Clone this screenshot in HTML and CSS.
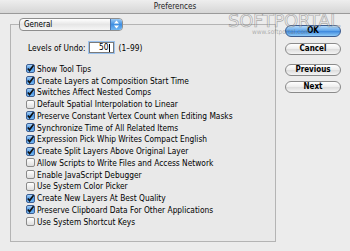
FILE: index.html
```html
<!DOCTYPE html>
<html>
<head>
<meta charset="utf-8">
<link rel="stylesheet" href="styles.css">
</head>
<body>
<div class="window">
  <div class="titlebar">Preferences</div>
  <div class="content">
    <div class="group">
      <div class="popup">
        <span class="popup-label">General</span>
        <span class="popup-arrows">
          <svg width="7" height="9" viewBox="0 0 7 9"><path d="M3.5 0.5 L6 3.5 H1 Z M3.5 8.5 L6 5.5 H1 Z" fill="#fff"/></svg>
        </span>
      </div>
      <div class="undo-row">
        <span class="undo-label">Levels of Undo:</span>
        <span class="undo-input">50<span class="caret"></span></span>
        <span class="undo-range">(1–99)</span>
      </div>
      <ul class="options">
        <li><span class="cb on"></span>Show Tool Tips</li>
        <li><span class="cb on"></span>Create Layers at Composition Start Time</li>
        <li><span class="cb on"></span>Switches Affect Nested Comps</li>
        <li><span class="cb"></span>Default Spatial Interpolation to Linear</li>
        <li><span class="cb on"></span>Preserve Constant Vertex Count when Editing Masks</li>
        <li><span class="cb on"></span>Synchronize Time of All Related Items</li>
        <li><span class="cb on"></span>Expression Pick Whip Writes Compact English</li>
        <li><span class="cb on"></span>Create Split Layers Above Original Layer</li>
        <li><span class="cb"></span>Allow Scripts to Write Files and Access Network</li>
        <li><span class="cb"></span>Enable JavaScript Debugger</li>
        <li><span class="cb"></span>Use System Color Picker</li>
        <li><span class="cb on"></span>Create New Layers At Best Quality</li>
        <li><span class="cb on"></span>Preserve Clipboard Data For Other Applications</li>
        <li><span class="cb"></span>Use System Shortcut Keys</li>
      </ul>
    </div>
    <div class="buttons">
      <div class="btn default">OK</div>
      <div class="btn cancel">Cancel</div>
      <div class="btn prev">Previous</div>
      <div class="btn next">Next</div>
    </div>
  </div>
  <div class="watermark">
    <span class="wm-big">SOFTPORTAL</span>
    <span class="wm-small">www.softportal.com</span>
  </div>
</div>
</body>
</html>
```
FILE: styles.css
```css
html, body {
  margin: 0;
  padding: 0;
}
body {
  width: 350px;
  height: 251px;
  overflow: hidden;
  background: #ececec;
  font-family: "DejaVu Sans Condensed", "DejaVu Sans", sans-serif;
  color: #000;
}
.window {
  position: relative;
  width: 350px;
  height: 251px;
  background: #ececec;
}
.titlebar {
  height: 13px;
  line-height: 13px;
  text-align: center;
  font-size: 8px;
  color: #222;
  background: linear-gradient(#eeeeee, #d6d6d6);
  border-bottom: 1px solid #9a9a9a;
}
.content {
  display: flex;
  align-items: flex-start;
}
.group {
  margin: 10px 0 0 10px;
  width: 264px;
  height: 216px;
  border: 1px solid #b4b4b4;
  background: #e9e9e9;
}
.popup {
  display: flex;
  margin: -7px 0 0 8px;
  width: 102px;
  height: 11px;
  border: 1px solid #8e8e8e;
  border-radius: 4px;
  background: linear-gradient(#ffffff, #e6e6e6 50%, #f6f6f6);
  overflow: hidden;
}
.popup-label {
  flex: 1;
  font-size: 8px;
  line-height: 11px;
  padding-left: 4px;
}
.popup-arrows {
  width: 11px;
  display: flex;
  align-items: center;
  justify-content: center;
  background: linear-gradient(#9dcbf5, #3f8fe2 50%, #74b8f2);
  border-left: 1px solid #4a74b0;
}
.undo-row {
  display: flex;
  align-items: center;
  margin-top: 11px;
  padding-left: 17px;
  height: 11px;
  font-size: 8.3px;
  white-space: nowrap;
}
.undo-label {
  margin-right: 3px;
}
.undo-input {
  position: relative;
  width: 20px;
  height: 9px;
  line-height: 9px;
  padding-right: 3px;
  border: 1px solid #7a7a7a;
  background: #fff;
  text-align: right;
  box-shadow: 0 0 0 1px #9cc3ef;
}
.caret {
  display: inline-block;
  width: 1px;
  height: 8px;
  background: #000;
  vertical-align: middle;
}
.undo-range {
  margin-left: 5px;
}
.options {
  list-style: none;
  margin: 10px 0 0 0;
  padding: 0 0 0 15px;
  font-size: 8.3px;
}
.options li {
  display: flex;
  align-items: center;
  height: 11.75px;
  white-space: nowrap;
}
.cb {
  width: 7px;
  height: 7px;
  margin-right: 2px;
  border: 1px solid #8a8a8a;
  border-radius: 2px;
  background: linear-gradient(#ffffff, #dedede);
  flex: none;
}
.cb.on {
  border-color: #3d5f94;
  background:
    url("data:image/svg+xml;utf8,<svg xmlns='http://www.w3.org/2000/svg' width='9' height='9' viewBox='0 0 9 9'><path d='M1.8 4.4 L3.6 6.6 L8.2 0.4' fill='none' stroke='%23111' stroke-width='1.6'/></svg>") center/9px 9px no-repeat,
    linear-gradient(#a9d3f8, #4a97e6 55%, #79bbf3);
}
.buttons {
  display: flex;
  flex-direction: column;
  margin: 11px 0 0 9px;
}
.btn {
  width: 54px;
  height: 10px;
  line-height: 10px;
  border: 1px solid #8a8a8a;
  border-radius: 6px;
  text-align: center;
  font-size: 8px;
  font-weight: bold;
  background: linear-gradient(#ffffff, #ececec 50%, #dcdcdc 51%, #f4f4f4);
}
.btn.default {
  border-color: #3b5b8f;
  background: linear-gradient(#b8dcfa, #5aa2ea 50%, #3a86dd 51%, #8fcaf6);
}
.btn.cancel { margin-top: 6px; }
.btn.prev { margin-top: 9px; }
.btn.next { margin-top: 5px; }
.watermark {
  position: absolute;
  left: 228px;
  top: 12px;
  pointer-events: none;
}
.wm-big {
  display: block;
  font-family: "DejaVu Sans", sans-serif;
  font-size: 18px;
  line-height: 17px;
  letter-spacing: -0.3px;
  color: rgba(255,255,255,0.3);
  -webkit-text-stroke: 0.7px rgba(100,100,100,0.5);
}
.wm-small {
  display: block;
  margin-left: 24px;
  font-size: 6.5px;
  line-height: 7px;
  color: rgba(120,120,120,0.55);
}
```
